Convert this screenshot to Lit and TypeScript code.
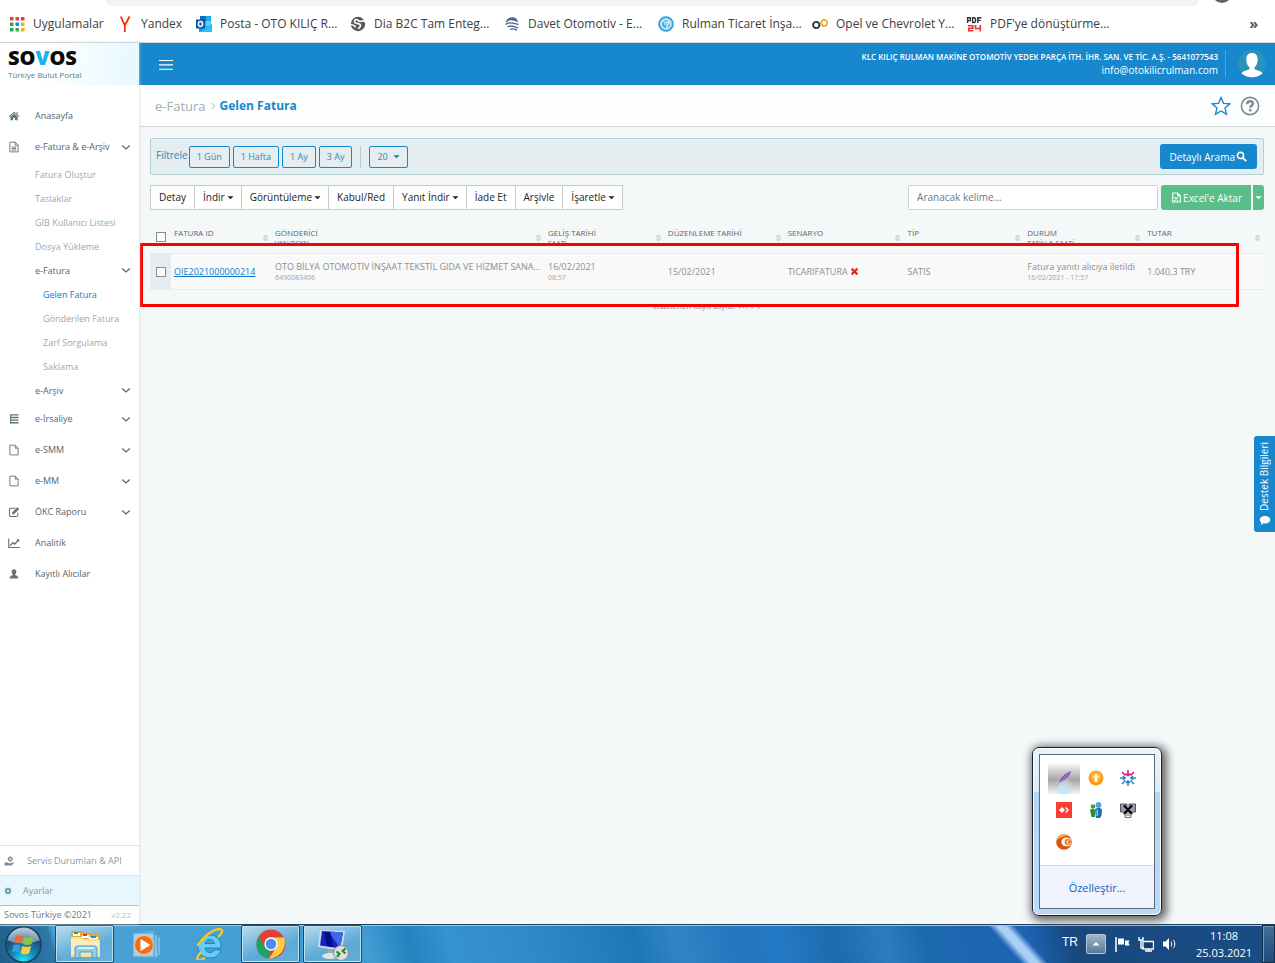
import { LitElement, html, css, svg, nothing } from "lit";
import { customElement, state } from "lit/decorators.js";
import { classMap } from "lit/directives/class-map.js";

const glyphs: Record<string, unknown> = {
  home: svg`<path d="M8 2.200 15 8.200l-.9 1L8 4 1.900 9.200 1 8.200z"/><path d="M3.200 9 8 5l4.800 4v4.800H9.300v-3.600H6.700v3.600H3.200z"/><path d="M11.300 3h1.700v3l-1.700-1.500z"/>`,
  doc: svg`<path d="M2.500 1.500h7l4 4v9h-11zM9.500 1.500v4h4M5 8h6M5 10h6M5 12h6" fill="none" stroke="currentColor" stroke-width="1.200"/>`,
  file: svg`<path d="M2.500 1.500h7l4 4v9h-11zM9.500 1.500v4h4" fill="none" stroke="currentColor" stroke-width="1.200"/>`,
  list: svg`<path d="M3 2.500h11M3 6h11M3 9.500h11M3 13h11" stroke="currentColor" stroke-width="1.700"/><path d="M3.500 2v12" stroke="currentColor" stroke-width="1.500"/>`,
  edit: svg`<path d="M13 9v3.500a1.500 1.500 0 0 1-1.500 1.500h-8A1.500 1.500 0 0 1 2 12.500v-8A1.500 1.500 0 0 1 3.500 3H10" fill="none" stroke="currentColor" stroke-width="1.400"/><path d="m5.500 8.500 7-7 2.500 2.500-7 7H5.500z"/>`,
  chart: svg`<path d="M1 2v12h15" fill="none" stroke="currentColor" stroke-width="1.500"/><path d="m3 11.500 3.500-4 2.500 2 5-5.500" fill="none" stroke="currentColor" stroke-width="1.900"/><path d="M11 3h4v4z"/>`,
  user: svg`<path d="M8 1.500c2 0 3.200 1.400 3.200 3.300 0 1.600-.7 2.800-1.500 3.600v1.200c2 .6 4 1.200 4 4.400H2.300c0-3.200 2-3.800 4-4.400V8.400C5.500 7.600 4.800 6.400 4.800 4.800 4.800 2.900 6 1.500 8 1.500z"/>`,
  service: svg`<path d="M1 10.500h5l2 1h3l4-1.500 1 1-4 4H1z"/><circle cx="10" cy="4.800" r="2.700" fill="none" stroke="currentColor" stroke-width="2.200"/><path d="M10 .5v2M10 7.200v2M5.800 4.800h2M12.200 4.800h2" stroke="currentColor" stroke-width="1.500"/>`,
  gear: svg`<circle cx="8" cy="8" r="3.800" fill="none" stroke="currentColor" stroke-width="3"/><path d="M8 1v3M8 12v3M1 8h3M12 8h3M3 3l2 2M11 11l2 2M13 3l-2 2M5 11l-2 2" stroke="currentColor" stroke-width="2.200"/>`,
  chevron: svg`<path d="m2 5.500 6 5.500 6-5.500" fill="none" stroke="currentColor" stroke-width="1.900"/>`,
  search: svg`<circle cx="6.500" cy="6.500" r="4.500" fill="none" stroke="currentColor" stroke-width="2.300"/><path d="m10 10 4.800 4.800" stroke="currentColor" stroke-width="2.800"/>`,
  excel: svg`<path d="M2.500 1.500h7l4 4v9h-11zM9.500 1.500v4h4M5 7.500l5 5.500M10 7.500l-5 5.500" fill="none" stroke="currentColor" stroke-width="1.600"/>`,
  cross: svg`<path d="M1.500 4.300 4.300 1.500 8 5.200l3.700-3.700 2.800 2.800L10.800 8l3.700 3.700-2.800 2.800L8 10.800l-3.700 3.700-2.800-2.800L5.200 8z"/>`,
  chat: svg`<path d="M8 2.500c4 0 7 2.200 7 5s-3 5-7 5c-.7 0-1.400-.1-2-.2C5 13.500 3.500 14.300 1.800 14.500c.8-.9 1.300-2 1.400-3C1.800 10.500 1 9.100 1 7.500c0-2.800 3-5 7-5z"/>`,
  star: svg`<path d="m8 1.200 2 4.700 5 .4-3.800 3.300 1.200 5L8 12l-4.400 2.600 1.200-5L1 6.300l5-.4z" fill="none" stroke="currentColor" stroke-width="1.100"/>`,
  help: svg`<circle cx="8" cy="8" r="6.900" fill="none" stroke="currentColor" stroke-width="1.300"/><path d="M5.800 6.600C5.800 5 6.700 4.200 8 4.200s2.300.8 2.300 2C10.300 7.600 8.200 7.700 8.200 9.300" fill="none" stroke="currentColor" stroke-width="1.900"/><path d="M7.200 10.400h2v1.900h-2z"/>`,
  menu: svg`<path d="M0 4h16M0 9h16M0 14h16" stroke="currentColor" stroke-width="1.300"/>`,
  sort: svg`<path d="M8 0 15 7H1zM8 16l7-7H1z"/>`,
  caret: svg`<path d="M1 5h14l-7 7z"/>`,
  apps: svg`<path d="M1 1h3.500v3.500H1zM6.500 1H10v3.500H6.500zM12 1h3.500v3.500H12z" fill="#ea4335"/><path d="M1 6.500h3.500V10H1z" fill="#34a853"/><path d="M6.500 6.500H10V10H6.500z" fill="#1a86f0"/><path d="M12 6.500h3.500V10H12z" fill="#fbb005"/><path d="M1 12h3.500v3.500H1zM6.500 12H10v3.500H6.500z" fill="#34a853"/><path d="M12 12h3.500v3.500H12z" fill="#fbb005"/>`,
  yandex: svg`<path d="m3.800.5 4 9V16M12.500.5l-4.700 9" fill="none" stroke="#fb2b0e" stroke-width="1.800"/>`,
  outlook: svg`<path d="M4 0h11v11H4z" fill="#28a8ea"/><path d="M4 0h6v5H4z" fill="#0f6cbd"/><path d="M10 5h5v5h-5z" fill="#50d9ff"/><path d="m3 8 6.500 3.500L16 8v8H3z" fill="#1490df"/><path d="M3 16 16 8v8z" fill="#2bc0f5"/><path d="M0 3.500h9v9H0z" fill="#0a58a8"/><ellipse cx="4.500" cy="8" rx="2.100" ry="2.400" fill="none" stroke="#fff" stroke-width="1.500"/>`,
  globe: svg`<circle cx="8" cy="8" r="7.200" fill="#54575b"/><path d="M15 5.500c-2-1.500-3 .2-5-.2C7.500 5 8 3 6 3.500 4 4.200 4 7 6 7.300c2 .2 4.500 0 4.500 2.200S8.500 11.500 8.500 13M1 8.500c2.500 0 3 1.500 5 2.500" fill="none" stroke="#fff" stroke-width="1.600"/>`,
  davet: svg`<path d="M5 2.500c3-1 5-.7 7 .5M2 6c3-4 8-2.500 12-.5M1.500 8.500c4-3.500 8-1 13 0M3.500 11c3.500-2.500 7-.5 10.500 1M6 13.500c2.500-1.500 4.500-.5 7 .8M3 3.800c4-2.500 7-1 10 .3" fill="none" stroke="#42688c" stroke-width="1.300"/>`,
  rulman: svg`<circle cx="8" cy="8" r="7" fill="#8fcdf0" stroke="#2e9fe0" stroke-width="1.600"/><circle cx="8" cy="8" r="4.500" fill="#3fa9e4" stroke="#fff"/><path d="M5.500 6H11L8.500 11.500M6 8h3" fill="none" stroke="#fff" stroke-width="1.200"/>`,
  opel: svg`<circle cx="4.300" cy="9" r="3" fill="none" stroke="#222a36" stroke-width="1.500" /><circle cx="12.300" cy="7" r="2.900" fill="none" stroke="#f3a51c" stroke-width="1.500"/><circle cx="4.300" cy="9" r="3.700" fill="none" stroke="#222a36" stroke-dasharray="1.500 1.400"/><circle cx="12.300" cy="7" r="3.500" fill="none" stroke="#f3a51c" stroke-dasharray="1.500 1.300"/>`,
  pdf: svg`<path d="M1.600 7V1.800h2.700v2.800H1.600M6.600 1.800h1.900L9.500 3v2.500l-1 1H6.600zM11.800 7V1.800h3.500M11.800 4.400h3" fill="none" stroke="#333" stroke-width="1.400"/><path d="M1.800 9.700h5v2.500h-4v2.500h4.500M9.500 9v3.500h5M14.300 9v6.500" fill="none" stroke="#e5322f" stroke-width="1.600"/>`,
  explorer: svg`<path d="M2 8V4l2-1h10l2 2h14v24H2z" fill="#d9a93d"/><path d="M4 5h7v3H4z" fill="#fff"/><path d="M5 4h4v2H5z" fill="#1fb04b"/><path d="M13 7h7v3h-7z" fill="#fff"/><path d="M14 6h4v2h-4z" fill="#e1372e"/><path d="M20 9h9v3h-9z" fill="#fff"/><path d="M22 8h5v2h-5z" fill="#1b8fe0"/><path d="M2 9h11l1 2h16l1 2v16H2z" fill="#f7e09a"/><path d="M2 11h12l1 2h15v13H2z" fill="#fbedb9"/><path d="M6 30V21c0-2 1-3 3-3h16c2 0 3 1 3 3v9h-5v-6H11v6z" fill="#8ecdea" stroke="#4a9cc4"/><path d="M9 20h16" stroke="#d6f1fc" stroke-width="2"/>`,
  player: svg`<path d="m10 4 13-1 4 26-15 1z" fill="#72b8e0"/><path d="M2 5h21v24H2z" fill="#a5d0e8" stroke="#559bc6"/><path d="M25 7v21M28 9v18" stroke="#a9d7ef"/><circle cx="13" cy="17" r="9.500" fill="#f17017" stroke="#f9c79c"/><path d="m9.500 11 10 6-10 6z" fill="#fff"/>`,
  explorerWeb: svg`<path d="M28 20H12c.5 3 2.500 4.500 5 4.500 2 0 3.500-.8 4.500-2.500H28c-1.500 5-5.500 8-11 8C10 30 5 25 5 18.500S10 7 17 7c7.500 0 11.500 5.500 11 13zM12 15.500h9.500c-.5-2.500-2.300-4-4.700-4s-4.200 1.500-4.800 4z" fill="#65cdf6" stroke="#1b83c5"/><path d="M8 24c-3 4-5 7-3 8 2 .8 5-1 7-2.300M25 9c4-3.500 6-7 2-7.700C21 .5 10 8.500 4.500 18" fill="none" stroke="#f6c52d" stroke-width="2.400"/>`,
  chrome: svg`<circle cx="16" cy="16" r="14.500" fill="#dc4437"/><path d="M3.500 8.500 10 19.500l6 4-3 7C5.500 29 1.500 23 1.500 16.500c0-3 .8-5.700 2-8z" fill="#1da462"/><path d="M16 9.500h13c3 8-2 20-15 21l7.500-11.500z" fill="#ffcd46"/><circle cx="16" cy="16" r="6.700" fill="#fff"/><circle cx="16" cy="16" r="5.300" fill="#4c8bf5"/>`,
  remote: svg`<path d="m3 2 25 1-3 20L1 19z" fill="#d7d9e3"/><path d="m5 3 21 1.500-3 16L3 17.500z" fill="#1022c9"/><path d="M12 3.500 26 4.500l-3 16z" fill="#4168e8"/><path d="M7 4h6l3 15-6-1z" fill="#070d80"/><path d="m11 22 5 1v4h-5z" fill="#aaa"/><ellipse cx="13" cy="28" rx="8" ry="3" fill="#e4e4e8"/><circle cx="24" cy="25" r="7.500" fill="#dedede" stroke="#8b8b8b"/><path d="m19.500 23.500 3 2.500-2.500 3M28.500 20.500 25.500 23l3 2.500" fill="none" stroke="#218b2e" stroke-width="2"/>`,
  orb: svg`<defs><radialGradient id="o" cx=".5" cy=".95" r=".95"><stop offset="0" stop-color="#27e4fb"/><stop offset=".35" stop-color="#1889bd"/><stop offset=".7" stop-color="#1c4d78"/><stop offset="1" stop-color="#a9c2d3"/></radialGradient></defs><circle cx="16" cy="16" r="15.300" fill="url(#o)" stroke="#16384f"/><path d="M2.500 12a14 14 0 0 1 27 0c-7 4-20 4-27 0z" fill="#e9f2f7" opacity=".45"/><path d="M9.500 8.500c2-1 4-.6 6 .4l-1.500 6.300c-2-1-4-1.400-6-.4z" fill="#ee6a30"/><path d="M17 9.500c2.500 1 5 1 7.500 0L23 15.600c-2.500 1-5 1-7.500 0z" fill="#8cc544"/><path d="M7.500 16.500c2-1 4-.6 6 .4L12 23c-2-1-4-1.400-6-.4z" fill="#3a9ee0"/><path d="M15 17.300c2.500 1 5 1 7.500 0L21 23.600c-2.500 1-5 1-7.500 0z" fill="#fccc3b"/>`,
  feather: svg`<path d="M3 12.500C4 8 8 4 15 1c-1 4.500-5 9-12 11.500z" fill="#8350b8"/><path d="M.5 15.500 12.500 3.500" stroke="#b98be0"/>`,
  update: svg`<circle cx="8" cy="8" r="7.500" fill="#f99b1c"/><circle cx="8" cy="6.500" r="5" fill="#fdb52e"/><path d="m8 3.500 4 4H9.500V12h-3V7.500H4z" fill="#fff8cf"/>`,
  snow: svg`<path d="M8 10.500V16M0 8h5M11 8h5M2 14l3.500-3.500M10.500 10.500 14 14M3 6l2.200 2L3 10M13 6l-2.200 2 2.200 2M6 13l2-2.200 2 2.200" fill="none" stroke="#2686c9" stroke-width="1.500"/><path d="M8 0v5.500M2 2l3.500 3.500M14 2l-3.500 3.500M5.800 3.500 8 5.800l2.200-2.300" fill="none" stroke="#d9247f" stroke-width="1.600"/>`,
  anydesk: svg`<path d="M0 0h16v16H0z" fill="#fa3c34"/><path d="m6 5 3 3-3 3-3-3z" fill="#fff"/><path d="m9.500 5.500 2.700 2.500-2.700 2.500" fill="none" stroke="#fff" stroke-width="1.300"/>`,
  people: svg`<circle cx="5" cy="4.500" r="2.300" fill="#3d9c43"/><path d="M2 8c1-1.500 4-1.500 5 0v7H3.500z" fill="#2f8a3a"/><circle cx="10.500" cy="3" r="2.900" fill="#4fa8df"/><path d="M7 7.500c1-2 6-2 7 0l-.5 6L12 16H8z" fill="#1f6fae"/><path d="M9.300 7.500v6.500" stroke="#8fd0f4" stroke-width="1.400"/>`,
  offline: svg`<path d="M.5 2H7v8H.5zM9 2h6.500v8H9z" fill="#9a9bb0" stroke="#555"/><path d="M5 5h6v7H5z" fill="#aab"/><path d="M4 3.500l8 8.500M12 3.500l-8 8.500" stroke="#000" stroke-width="2.200"/><path d="M5 13h6v2.500H5z" fill="#eee" stroke="#777"/>`,
  orange: svg`<circle cx="8" cy="8" r="7.800" fill="#d9550f"/><path d="M1 6.500a7.500 7.500 0 0 1 12-4.500C8 1 3 4 1 6.500z" fill="#ffbd4d"/><path d="M14.500 5C9.500 1.500 5 4.500 5.500 8.500s6 5 9 2.500z" fill="#fff3df"/><circle cx="11.500" cy="8" r="2.900" fill="#ef7c1b"/><path d="M12.500 6.500c-2 0-2 3 0 3" fill="none" stroke="#fff"/>`,
  flag: svg`<path d="M2 1v15" stroke="#fff" stroke-width="1.500"/><path d="M4 2.500h6v6H4zM11 4.500h4.500l-1 2 1 3H11z" fill="#fff"/>`,
  network: svg`<path d="M5 5.500h10.500v7.500H5zM7 15h7M10.500 13v2" fill="#15406c" stroke="#fff" stroke-width="1.300"/><path d="M1 1v3h4V1M3 4v8h3" fill="none" stroke="#fff" stroke-width="1.400"/>`,
  speaker: svg`<path d="M1 5.500h2.500L7 2v12l-3.500-3.500H1z" fill="#fff"/><path d="M9 5.500c1 1.500 1 3.500 0 5M11.300 3.800c2 2.500 2 6 0 8.400" fill="none" stroke="#fff"/>`,
  avatar: svg`<circle cx="16" cy="16" r="16" fill="#2a93ba"/><path d="M16 3.500c4.500 0 6.500 3 6.500 7 0 4.500-1.500 7.500-3.500 9v2.500c3 1.500 7 1.500 9 4.500-6 6-18 6-24 0 2-3 6-3 9-4.500v-2.500c-2-1.500-3.500-4.500-3.500-9 0-4 2-7 6.500-7z" fill="#fff"/>`,
};

const wide = new Set(["explorer", "player", "explorerWeb", "chrome", "remote", "orb", "avatar"]);

const icon = (name: string, cls = "i16") => {
  const side = wide.has(name) ? 32 : 16;
  return html`<svg class=${cls} viewBox="0 0 ${side} ${side}" fill="currentColor" aria-hidden="true">${glyphs[name]}</svg>`;
};

type Entry = { label: string; icon?: string; level: number; arrow?: boolean; active?: boolean; children?: Entry[] };

const menu: Entry[] = [
  { label: "Anasayfa", icon: "home", level: 0 },
  {
    label: "e-Fatura & e-Arşiv", icon: "doc", level: 0, arrow: true,
    children: [
      { label: "Fatura Oluştur", level: 2 },
      { label: "Taslaklar", level: 2 },
      { label: "GİB Kullanıcı Listesi", level: 2 },
      { label: "Dosya Yükleme", level: 2 },
      { label: "e-Fatura", level: 1, arrow: true },
      { label: "Gelen Fatura", level: 3, active: true },
      { label: "Gönderilen Fatura", level: 3 },
      { label: "Zarf Sorgulama", level: 3 },
      { label: "Saklama", level: 3 },
      { label: "e-Arşiv", level: 1, arrow: true },
    ],
  },
  { label: "e-İrsaliye", icon: "list", level: 0, arrow: true },
  { label: "e-SMM", icon: "file", level: 0, arrow: true },
  { label: "e-MM", icon: "file", level: 0, arrow: true },
  { label: "ÖKC Raporu", icon: "edit", level: 0, arrow: true },
  { label: "Analitik", icon: "chart", level: 0 },
  { label: "Kayıtlı Alıcılar", icon: "user", level: 0 },
];

const bookmarks = [
  ["apps", "Uygulamalar"],
  ["yandex", "Yandex"],
  ["outlook", "Posta - OTO KILIÇ R..."],
  ["globe", "Dia B2C Tam Enteg..."],
  ["davet", "Davet Otomotiv - E..."],
  ["rulman", "Rulman Ticaret İnşa..."],
  ["opel", "Opel ve Chevrolet Y..."],
  ["pdf", "PDF'ye dönüştürme..."],
];

@customElement("browser-bookmarks")
export class BrowserBookmarks extends LitElement {
  static styles = css`
    :host { display: block; background: #fff; border-bottom: 1px solid #d3d5d8; }
    .strip { display: flex; height: 6px; padding-left: 106px; overflow: hidden; }
    .address { flex: 1; background: #f1f3f4; border-radius: 0 0 12px 12px; }
    .profile { width: 76px; display: flex; justify-content: center; align-items: flex-end; overflow: hidden; }
    .dot { width: 20px; height: 20px; flex: none; border-radius: 50%; background: #5f6368; margin: 0 30px 3px 0; }
    .bar { display: flex; align-items: center; gap: 16px; height: 36px; padding: 0 17px 0 9px; }
    a { display: flex; align-items: center; gap: 8px; width: 138px; color: #3c4043; font-size: 12px; line-height: 16px; white-space: nowrap; text-decoration: none; }
    a.apps { width: 92px; }
    a.yandex { width: 63px; }
    .i16 { width: 16px; height: 16px; flex: none; }
    button { margin-left: auto; border: 0; padding: 0 0 2px; background: none; color: #4c5054; font: bold 14px "Open Sans", sans-serif; }
  `;
  render() {
    return html`
      <div class="strip"><div class="address"></div><div class="profile"><span class="dot"></span></div></div>
      <nav class="bar">
        ${bookmarks.map(([name, text]) => html`<a class=${name} href="#">${icon(name)}<span>${text}</span></a>`)}
        <button aria-label="Diğer yer işaretleri">»</button>
      </nav>
    `;
  }
}

@customElement("portal-sidebar")
export class PortalSidebar extends LitElement {
  static styles = css`
    :host { display: flex; flex-direction: column; width: 139px; flex: none; background: #fff; box-shadow: 0 0 3px #c9d2d6; z-index: 1; font-size: 9px; }
    .brand { box-sizing: border-box; height: 42px; padding: 4px 8px 0; background: linear-gradient(100deg, #fff 30%, #e6f8ff); }
    .logo { display: block; font: 800 20px/22px "Open Sans", sans-serif; color: #0a0a0a; }
    .logo b { color: #14b4ee; font-weight: 800; }
    .sub { display: block; font-size: 8px; line-height: 11px; color: #647b88; }
    nav { padding-top: 15px; }
    .group { padding-bottom: 1px; }
    a { display: flex; align-items: center; box-sizing: border-box; height: 24px; padding: 0 8px 0 35px; color: #9aa9b0; text-decoration: none; white-space: nowrap; }
    a.level0 { height: 31px; padding-left: 8px; color: #51666f; }
    a.level1 { color: #51666f; }
    a.level3 { padding-left: 43px; }
    a.active { color: #087acb; }
    .slot { width: 27px; height: 12px; flex: none; }
    .i12 { width: 12px; height: 12px; color: #5d747f; }
    .chev { width: 10px; height: 10px; margin-left: auto; }
    .foot { margin-top: auto; }
    .foot a { height: 30px; padding: 0 4px; border-top: 1px solid #dfe2e4; color: #8a989f; }
    .foot a .i12 { width: 10px; height: 10px; color: #7a8b93; }
    .foot .slot { width: 23px; height: 10px; }
    .foot a.settings { height: 31px; background: #e8f6fd; border-bottom: 1px solid #8bd0f3; }
    .foot .settings .slot { width: 19px; }
    .foot .settings .i12 { color: #5e92a9; width: 8px; }
    .copy { display: flex; justify-content: space-between; padding: 0 8px 0 4px; line-height: 18px; color: #6c7a81; }
    .version { color: #b4bcc0; font-size: 8px; }
  `;

  private entry(m: Entry): unknown {
    return html`
      <a href="#" class=${classMap({ [`level${m.level}`]: true, active: !!m.active })}>
        ${m.icon ? html`<span class="slot">${icon(m.icon, "i12")}</span>` : nothing}
        <span>${m.label}</span>
        ${m.arrow ? icon("chevron", "chev") : nothing}
      </a>
      ${m.children ? html`<div class="group">${m.children.map((c) => this.entry(c))}</div>` : nothing}
    `;
  }

  render() {
    return html`
      <div class="brand"><span class="logo">SO<b>V</b>OS</span><span class="sub">Türkiye Bulut Portal</span></div>
      <nav>${menu.map((m) => this.entry(m))}</nav>
      <div class="foot">
        <a href="#"><span class="slot">${icon("service", "i12")}</span>Servis Durumları &amp; API</a>
        <a href="#" class="settings"><span class="slot">${icon("gear", "i12")}</span>Ayarlar</a>
        <div class="copy"><span>Sovos Türkiye ©2021</span><span class="version">v2.22</span></div>
      </div>
    `;
  }
}

const columns = [
  { title: "FATURA ID", cls: "id" },
  { title: "GÖNDERİCİ", sub: "VKN/TCKN", cls: "sender" },
  { title: "GELİŞ TARİHİ", sub: "SAATİ" },
  { title: "DÜZENLEME TARİHİ" },
  { title: "SENARYO" },
  { title: "TİP" },
  { title: "DURUM", sub: "TARİH & SAATİ" },
  { title: "TUTAR" },
];

@customElement("invoice-page")
export class InvoicePage extends LitElement {
  @state() private selected = false;

  static styles = css`
    :host { display: flex; flex-direction: column; flex: 1; min-width: 0; background: #f4f8f9; font-size: 10px; }
    button, input, select { font-family: inherit; }
    .top { display: flex; align-items: center; height: 42px; padding: 0 9px 0 20px; background: #1788ce; color: #fff; }
    .burger { display: flex; border: 0; background: none; color: inherit; padding: 0; }
    .i14 { width: 14px; height: 14px; }
    .account { margin-left: auto; padding-right: 7px; border-right: 1px dotted #7fc0e8; text-align: right; }
    .company { display: block; font-size: 8px; line-height: 12px; font-weight: 600; }
    .mail { display: block; font-size: 10px; line-height: 14px; }
    .avatar { width: 28px; height: 28px; margin-left: 12px; }
    .crumbs { display: flex; align-items: center; height: 41px; padding: 0 15px 0 16px; border-bottom: 1px solid #d3d8da; background: #fdfefe; font-size: 13px; color: #a5adb2; }
    .crumbs a { color: inherit; text-decoration: none; }
    .arrow { width: 8px; height: 8px; margin: 0 3px; transform: rotate(-90deg); }
    h1 { margin: 0; font-size: 12px; font-weight: 700; color: #1788ce; }
    .actions { display: flex; gap: 9px; margin-left: auto; }
    .actions button { display: flex; border: 0; background: none; padding: 0; color: #1788ce; }
    .actions .help { color: #7e8b93; }
    .i20 { width: 20px; height: 20px; }
    .content { padding: 11px 11px 0; }
    .filter { display: flex; align-items: center; box-sizing: border-box; height: 37px; padding: 0 6px 0 5px; border: 1px solid #b2d0d9; border-radius: 2px; background: #e4edf0; color: #2f86bf; }
    .label { padding-bottom: 3px; }
    .pill { box-sizing: border-box; height: 22px; margin-right: 3px; padding: 0 7px; border: 1px solid #1788ce; border-radius: 2px; background: none; color: #3587b9; font-size: 9px; }
    .first { margin-left: 1px; }
    .rule { width: 1px; height: 22px; margin: 0 8px 0 5px; background: #b2d0d9; }
    .size { position: relative; display: flex; align-items: center; }
    .size select { appearance: none; width: 39px; margin: 0; }
    .size .caret { position: absolute; right: 8px; pointer-events: none; color: #1f6fa8; }
    .caret { width: 7px; height: 7px; margin-left: 2px; vertical-align: middle; }
    .detailed { display: flex; align-items: center; gap: 1px; margin-left: auto; height: 25px; padding: 0 10px; border: 0; border-radius: 3px; background: #1788ce; color: #fff; font-size: 10px; }
    .i11 { width: 11px; height: 11px; }
    .tools { display: flex; align-items: center; margin-top: 10px; }
    .tools button { white-space: nowrap; }
    .tool { box-sizing: border-box; height: 25px; margin: 0 0 0 -1px; padding: 0 8px 2px; border: 1px solid #c8cbcc; background: #fff; color: #222; font-size: 10px; }
    .tool:first-child { margin-left: 0; }
    .drop { padding-right: 7px; }
    .find { box-sizing: border-box; width: 250px; height: 25px; margin: 0 3px 0 auto; padding: 0 8px 2px; border: 1px solid #ccd3d8; border-radius: 2px; background: #fff; font-size: 10px; }
    .find::placeholder { color: #70777b; opacity: 1; }
    .excel { display: flex; align-items: center; gap: 1px; height: 25px; padding: 0 9px 0 10px; border: 0; border-radius: 3px 0 0 3px; background: #5bbe88; color: #fff; font-size: 10px; }
    .more { width: 11px; height: 25px; margin-left: 2px; padding: 0 2px; border: 0; border-radius: 0 3px 3px 0; background: #5bbe88; color: #fff; }
    .more .caret { margin: 0; display: block; }
    .grid { position: relative; margin-top: 12px; }
    table { width: 100%; table-layout: fixed; border-collapse: collapse; }
    th, td { padding: 0 3px; text-align: left; font-weight: 400; white-space: nowrap; }
    .check { width: 15px; }
    .id { width: 95px; }
    .sender { width: 267px; }
    th { height: 31px; color: #5f6468; font-size: 8px; vertical-align: top; }
    .head { display: grid; grid-template-columns: 1fr 7px; grid-template-rows: 11px 11px; line-height: 11px; padding-top: 5px; }
    .head small { grid-column: 1; grid-row: 2; font-size: 7px; }
    .sort { grid-column: 2; grid-row: 1 / span 2; align-self: center; width: 7px; height: 8px; color: #cfd4d6; }
    td { height: 35px; border: solid #eaebec; border-width: 1px 0; background: #f9f9f9; color: #8e8e8e; font-size: 9px; line-height: 12px; }
    td.check { background: #e4edf0; }
    td small { display: block; font-size: 7px; line-height: 10px; color: #a3a3a3; }
    td a { color: #0a7bd0; }
    .no { width: 9px; height: 9px; color: #c9302c; vertical-align: -1px; }
    .box { appearance: none; display: block; box-sizing: border-box; width: 10px; height: 10px; margin: 0 0 0 3px; border: 1px solid #8c8c8c; background: #fdfdfd; }
    th .box { margin-top: 10px; }
    .box:checked { background: #1788ce; }
    .count { margin: 10px 0 0; text-align: center; font-size: 8px; line-height: 12px; color: #8e8e8e; }
    .mark { position: absolute; left: -10px; right: 25px; top: 21px; height: 58px; border: 3px solid #fc0000; border-radius: 1px; pointer-events: none; }
  `;

  private toggle() {
    this.selected = !this.selected;
  }

  render() {
    const tool = (label: string, drop = false) =>
      html`<button class=${classMap({ tool: true, drop })}>${label}${drop ? icon("caret", "caret") : nothing}</button>`;
    return html`
      <header class="top">
        <button class="burger" aria-label="Menü">${icon("menu", "i14")}</button>
        <div class="account">
          <span class="company">KLC KILIÇ RULMAN MAKİNE OTOMOTİV YEDEK PARÇA İTH. İHR. SAN. VE TİC. A.Ş. - 5641077543</span>
          <span class="mail">info@otokilicrulman.com</span>
        </div>
        ${icon("avatar", "avatar")}
      </header>
      <div class="crumbs">
        <a href="#">e-Fatura</a>${icon("chevron", "arrow")}<h1>Gelen Fatura</h1>
        <div class="actions">
          <button aria-label="Favori">${icon("star", "i20")}</button>
          <button class="help" aria-label="Yardım">${icon("help", "i20")}</button>
        </div>
      </div>
      <main class="content">
        <div class="filter">
          <span class="label">Filtrele</span>
          <button class="pill first">1 Gün</button><button class="pill">1 Hafta</button><button class="pill">1 Ay</button><button class="pill">3 Ay</button>
          <span class="rule"></span>
          <span class="size"><select class="pill" aria-label="Sayfa boyutu"><option>20</option></select>${icon("caret", "caret")}</span>
          <button class="detailed">Detaylı Arama${icon("search", "i11")}</button>
        </div>
        <div class="tools">
          ${tool("Detay")}${tool("İndir", true)}${tool("Görüntüleme", true)}${tool("Kabul/Red")}${tool("Yanıt İndir", true)}${tool("İade Et")}${tool("Arşivle")}${tool("İşaretle", true)}
          <input class="find" type="text" placeholder="Aranacak kelime..." aria-label="Aranacak kelime" />
          <button class="excel">${icon("excel", "i11")}Excel'e Aktar</button>
          <button class="more" aria-label="Diğer">${icon("caret", "caret")}</button>
        </div>
        <div class="grid">
          <table>
            <thead>
              <tr>
                <th class="check"><input class="box" type="checkbox" aria-label="Tümünü seç" .checked=${this.selected} @change=${this.toggle} /></th>
                ${columns.map((c) => html`<th class=${c.cls ?? ""}><div class="head"><span>${c.title}</span>${icon("sort", "sort")}<small>${c.sub ?? nothing}</small></div></th>`)}
              </tr>
            </thead>
            <tbody>
              <tr>
                <td class="check"><input class="box" type="checkbox" aria-label="Faturayı seç" .checked=${this.selected} @change=${this.toggle} /></td>
                <td><a href="#">OIE2021000000214</a></td>
                <td>OTO BİLYA OTOMOTİV İNŞAAT TEKSTİL GIDA VE HİZMET SANA...<small>6490083406</small></td>
                <td>16/02/2021<small>08:57</small></td>
                <td>15/02/2021</td>
                <td>TICARIFATURA ${icon("cross", "no")}</td>
                <td>SATIS</td>
                <td>Fatura yanıtı alıcıya iletildi<small>16/02/2021 - 17:57</small></td>
                <td>1.040,3 TRY</td>
              </tr>
            </tbody>
          </table>
          <p class="count">Listelenen kayıt sayısı: 1-1 / 1</p>
          <div class="mark"></div>
        </div>
      </main>
    `;
  }
}

@customElement("desktop-taskbar")
export class DesktopTaskbar extends LitElement {
  static styles = css`
    :host {
      display: flex; align-items: stretch; box-sizing: border-box; height: 39px; flex: none; border-top: 1px solid #21405a; color: #fff;
      box-shadow: inset 0 1px #9cc7e4; font-size: 11px;
      background:
        linear-gradient(48deg, transparent calc(50% - 10px), #a9d0f5 calc(50% - 3px), #a9d0f5 calc(50% + 3px), transparent calc(50% + 10px)) calc(100% - 202px) 0 / 110px 39px no-repeat,
        linear-gradient(75deg, #205f8c 0, #2d77a7 54px, #4aa3d5 60px, #419cd2 360px, #2384c0 400px, #3593cf 440px, #2f89c9 520px, #1c77b8 620px, #3384c6 660px, #2176bd 720px, #257ac5 760px, #1c6bac 810px, #2e7bc0 860px, #1c69ae 900px, #1d63b3 1000px, #17497f 1040px, #1b4d84 100%);
    }
    .task { display: flex; align-items: center; justify-content: center; box-sizing: border-box; width: 59px; margin: 0 3px 0 0; padding: 0; border: 0; background: none; }
    .task.open { border: 1px solid #164e73; box-shadow: inset 0 0 0 1px #bfe2f3; border-radius: 2px; background: linear-gradient(160deg, #d5ebf6cc, #8bc2e055 60%, #7fc0e388); }
    .task.start { width: 46px; margin-right: 9px; }
    .i32 { width: 32px; height: 32px; }
    .orb { width: 37px; height: 37px; }
    .tray { display: flex; align-items: center; margin-left: auto; gap: 8px; }
    .lang { font: 12px "Liberation Sans", sans-serif; padding-bottom: 4px; }
    .up { display: flex; align-items: center; justify-content: center; box-sizing: border-box; width: 20px; height: 20px; padding: 0; border: 1px solid #b3c6d6; border-radius: 2px; background: linear-gradient(#9fb5c6, #56799a); color: #fff; }
    .i8 { width: 8px; height: 8px; transform: rotate(180deg); }
    .i16 { width: 16px; height: 16px; }
    .clock { width: 76px; text-align: center; line-height: 17px; }
    .show { box-sizing: border-box; width: 13px; padding: 0; border: 1px solid #0c2f50; box-shadow: inset 1px 1px #6f97ba; background: linear-gradient(#41709d, #1e4b7b); }
  `;
  render() {
    return html`
      <button class="task start" aria-label="Başlat">${icon("orb", "orb")}</button>
      <button class="task open" aria-label="Windows Gezgini">${icon("explorer", "i32")}</button>
      <button class="task" aria-label="Media Player">${icon("player", "i32")}</button>
      <button class="task" aria-label="Internet Explorer">${icon("explorerWeb", "i32")}</button>
      <button class="task open" aria-label="Chrome">${icon("chrome", "i32")}</button>
      <button class="task open" aria-label="Uzak Masaüstü">${icon("remote", "i32")}</button>
      <div class="tray">
        <span class="lang">TR</span>
        <button class="up" aria-label="Gizli simgeleri göster">${icon("caret", "i8")}</button>
        ${icon("flag")}${icon("network")}${icon("speaker")}
        <div class="clock">11:08<br />25.03.2021</div>
      </div>
      <button class="show" aria-label="Masaüstünü göster"></button>
    `;
  }
}

@customElement("app-root")
export class AppRoot extends LitElement {
  static styles = css`
    :host { position: relative; display: flex; flex-direction: column; height: 100vh; overflow: hidden; font-family: "Open Sans", "Noto Sans", sans-serif; }
    .portal { display: flex; flex: 1; min-height: 0; }
    .support { position: absolute; right: 0; top: 436px; z-index: 2; display: flex; flex-direction: column; align-items: center; justify-content: center; gap: 4px; width: 21px; height: 96px; padding: 0; border: 0; border-radius: 3px 0 0 3px; background: #1788ce; color: #fff; font: 10px/21px "Open Sans", sans-serif; white-space: nowrap; }
    .turned { writing-mode: vertical-rl; transform: rotate(180deg); }
    .i12 { width: 12px; height: 12px; }
    .overflow { position: absolute; right: 113px; bottom: 47px; z-index: 3; box-sizing: border-box; width: 130px; height: 169px; padding: 6px; border: 1px solid #16202a; border-radius: 7px; background: linear-gradient(#e9f4fd, #d9ebfa 26%, #b4d5f3 27%, #b9dafa); box-shadow: inset 0 0 0 1px #fff, 2px 2px 9px 3px #444c; display: flex; }
    .panel { flex: 1; display: flex; flex-direction: column; border: 1px solid #5d6b78; background: #fff; }
    .icons { display: grid; grid-template-columns: repeat(3, 32px); grid-auto-rows: 32px; padding: 7px 8px; flex: 1; }
    .icons button { display: flex; align-items: center; justify-content: center; border: 0; padding: 0; background: none; }
    .icons .hot { background: radial-gradient(ellipse at bottom, #c6e4f9 10%, transparent 45%), linear-gradient(#fff, #a5a5a5 55%, #f5f5f5); }
    .i16 { width: 16px; height: 16px; }
    .panel a { display: flex; align-items: center; justify-content: center; height: 42px; border-top: 1px solid #ccd7e8; background: #f0f3fc; color: #0b62c4; font-size: 11px; text-decoration: none; }
  `;
  render() {
    return html`
      <browser-bookmarks></browser-bookmarks>
      <div class="portal">
        <portal-sidebar></portal-sidebar>
        <invoice-page></invoice-page>
      </div>
      <desktop-taskbar></desktop-taskbar>
      <button class="support"><span class="turned">Destek Bilgileri</span>${icon("chat", "i12")}</button>
      <div class="overflow">
        <div class="panel">
          <div class="icons">
            ${["feather", "update", "snow", "anydesk", "people", "offline", "orange"].map((n, i) => html`<button class=${i === 0 ? "hot" : ""} aria-label="Tepsi simgesi">${icon(n)}</button>`)}
          </div>
          <a href="#">Özelleştir...</a>
        </div>
      </div>
    `;
  }
}
